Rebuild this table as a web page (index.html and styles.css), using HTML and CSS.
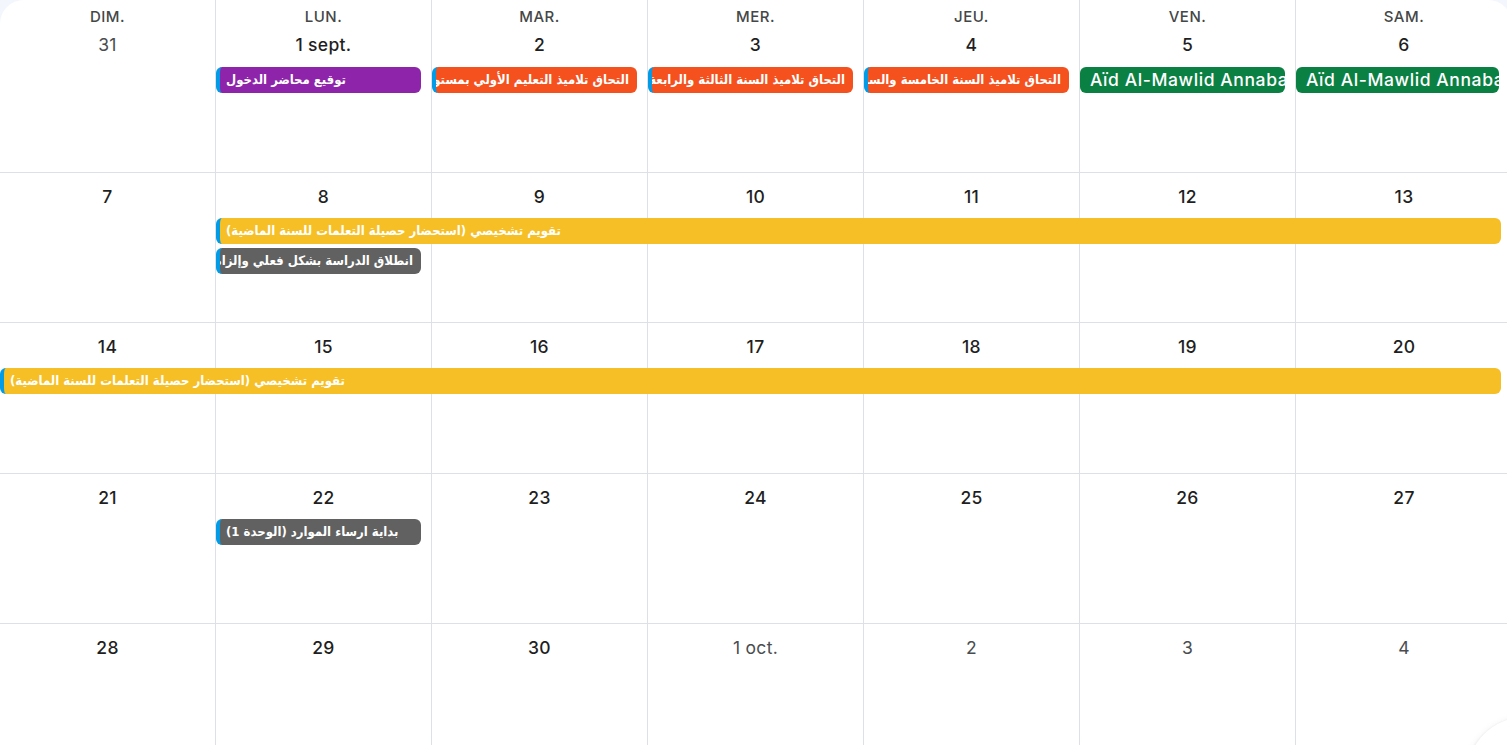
FILE: index.html
```html
<!DOCTYPE html>
<html lang="fr">
<head>
<meta charset="utf-8">
<title>Calendrier</title>
<link rel="stylesheet" href="styles.css">
</head>
<body>
<div class="card">
  <div class="week week-first">
    <div class="cell"><div class="dow">DIM.</div><div class="date muted">31</div></div>
    <div class="cell"><div class="dow">LUN.</div><div class="date">1 sept.</div></div>
    <div class="cell"><div class="dow">MAR.</div><div class="date">2</div></div>
    <div class="cell"><div class="dow">MER.</div><div class="date">3</div></div>
    <div class="cell"><div class="dow">JEU.</div><div class="date">4</div></div>
    <div class="cell"><div class="dow">VEN.</div><div class="date">5</div></div>
    <div class="cell"><div class="dow">SAM.</div><div class="date">6</div></div>
    <div class="ev purple c2"><span class="t">توقيع محاضر الدخول</span></div>
    <div class="ev orange c3"><span class="t">التحاق تلاميذ التعليم الأولي بمستوييه</span></div>
    <div class="ev orange c4"><span class="t">التحاق تلاميذ السنة الثالثة والرابعة</span></div>
    <div class="ev orange c5"><span class="t">التحاق تلاميذ السنة الخامسة والسادسة</span></div>
    <div class="ev green c6"><span class="t">Aïd Al-Mawlid Annabaoui</span></div>
    <div class="ev green c7"><span class="t">Aïd Al-Mawlid Annabaoui</span></div>
  </div>

  <div class="week week-n h150">
    <div class="cell"><div class="date">7</div></div>
    <div class="cell"><div class="date">8</div></div>
    <div class="cell"><div class="date">9</div></div>
    <div class="cell"><div class="date">10</div></div>
    <div class="cell"><div class="date">11</div></div>
    <div class="cell"><div class="date">12</div></div>
    <div class="cell"><div class="date">13</div></div>
    <div class="ev yellow c2-7"><span class="t">تقويم تشخيصي (استحضار حصيلة التعلمات للسنة الماضية)</span></div>
    <div class="ev gray c2 r3"><span class="t">انطلاق الدراسة بشكل فعلي وإلزامي</span></div>
  </div>

  <div class="week week-n h151">
    <div class="cell"><div class="date">14</div></div>
    <div class="cell"><div class="date">15</div></div>
    <div class="cell"><div class="date">16</div></div>
    <div class="cell"><div class="date">17</div></div>
    <div class="cell"><div class="date">18</div></div>
    <div class="cell"><div class="date">19</div></div>
    <div class="cell"><div class="date">20</div></div>
    <div class="ev yellow c1-7"><span class="t">تقويم تشخيصي (استحضار حصيلة التعلمات للسنة الماضية)</span></div>
  </div>

  <div class="week week-n h150">
    <div class="cell"><div class="date">21</div></div>
    <div class="cell"><div class="date">22</div></div>
    <div class="cell"><div class="date">23</div></div>
    <div class="cell"><div class="date">24</div></div>
    <div class="cell"><div class="date">25</div></div>
    <div class="cell"><div class="date">26</div></div>
    <div class="cell"><div class="date">27</div></div>
    <div class="ev gray c2"><span class="t">بداية ارساء الموارد (الوحدة 1)</span></div>
  </div>

  <div class="week week-n week-last">
    <div class="cell"><div class="date">28</div></div>
    <div class="cell"><div class="date">29</div></div>
    <div class="cell"><div class="date">30</div></div>
    <div class="cell"><div class="date muted">1 oct.</div></div>
    <div class="cell"><div class="date muted">2</div></div>
    <div class="cell"><div class="date muted">3</div></div>
    <div class="cell"><div class="date muted">4</div></div>
  </div>
</div>
<div class="fab"></div>
</body>
</html>
```

FILE: styles.css
```css
html, body {
  margin: 0;
  height: 100%;
  overflow: hidden;
  background: #f3f6fc;
}

body {
  font-family: Inter, "Open Sans", Roboto, sans-serif;
}

.card {
  width: 1512px;
  height: 100%;
  background: #ffffff;
  border-radius: 24px 24px 0 0;
  display: flex;
  flex-direction: column;
  overflow: hidden;
}

.week {
  display: grid;
  grid-template-columns: repeat(7, 216px);
  border-bottom: 1px solid #dde1e6;
  box-sizing: border-box;
  flex: none;
}

.week-first {
  height: 173px;
  grid-template-rows: 67px 30px 30px 1fr;
}

.week-n {
  grid-template-rows: 45px 30px 30px 1fr;
}

.h150 { height: 150px; }
.h151 { height: 151px; }

.week-last {
  flex: 1;
  border-bottom: 0;
}

.cell {
  grid-row: 1 / -1;
  border-right: 1px solid #dde1e6;
  text-align: center;
  box-sizing: border-box;
}

.week-n .cell {
  padding-top: 12px;
}

.cell:nth-child(1) { grid-column: 1; }
.cell:nth-child(2) { grid-column: 2; }
.cell:nth-child(3) { grid-column: 3; }
.cell:nth-child(4) { grid-column: 4; }
.cell:nth-child(5) { grid-column: 5; }
.cell:nth-child(6) { grid-column: 6; }
.cell:nth-child(7) { grid-column: 7; border-right: 0; }

.dow {
  margin-top: 7px;
  margin-bottom: 6px;
  font-size: 15px;
  line-height: 20px;
  font-weight: 500;
  color: #444746;
  letter-spacing: 0.5px;
}

.date {
  font-size: 17.5px;
  line-height: 24px;
  font-weight: 500;
  color: #1f1f1f;
  letter-spacing: 0.3px;
}

.date.muted {
  color: #4a4d50;
  font-weight: 400;
}

.ev {
  grid-row: 2;
  align-self: start;
  height: 26px;
  margin-right: 11px;
  box-sizing: border-box;
  border-radius: 6px;
  border-left: 4px solid #039be5;
  padding: 0 8px 0 6px;
  overflow: hidden;
  white-space: nowrap;
  color: #ffffff;
  font-family: "DejaVu Sans Condensed", "DejaVu Sans", sans-serif;
  font-stretch: condensed;
  font-size: 13px;
  font-weight: 700;
  line-height: 26px;
}

.ev .t {
  display: block;
  direction: rtl;
  text-align: left;
}

.r3 { grid-row: 3; }

.c1-7 { grid-column: 1 / span 7; }
.c2-7 { grid-column: 2 / span 6; }
.c2 { grid-column: 2; }
.c3 { grid-column: 3; }
.c4 { grid-column: 4; }
.c5 { grid-column: 5; }
.c6 { grid-column: 6; }
.c7 { grid-column: 7; margin-right: 13px; }

.purple { background: #8e24aa; }
.orange { background: #f4511e; }
.yellow { background: #f6bf26; }
.gray { background: #616161; }

.green {
  background: #0b8043;
  border-left: 0;
  padding-left: 10px;
  padding-right: 0;
  font-family: Inter, "Open Sans", Roboto, sans-serif;
  font-stretch: normal;
  font-size: 17.5px;
  font-weight: 500;
  letter-spacing: 0.6px;
}

.green .t {
  direction: ltr;
}

.fab {
  position: fixed;
  left: 1467px;
  top: 717px;
  width: 116px;
  height: 116px;
  border-radius: 50%;
  background: #ffffff;
  box-shadow: 0 1px 3px rgba(60, 64, 67, 0.18), 0 2px 8px rgba(60, 64, 67, 0.08);
}
```
